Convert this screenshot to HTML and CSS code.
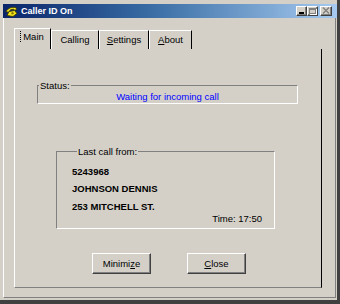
FILE: index.html
```html
<!DOCTYPE html>
<html>
<head>
<meta charset="utf-8">
<title>Caller ID On</title>
<link rel="stylesheet" href="styles.css">
</head>
<body>
<div class="window">
  <div class="titlebar">
    <svg class="appicon" width="13" height="11" viewBox="0 0 13 11">
      <path d="M2 9.5 L4 5.5 L9.5 4.5 L12 7.5 L8 10.5 Z" fill="#f4e41c" stroke="#3a3a00" stroke-width="0.9"/>
      <path d="M0.8 5.5 Q4.5 0.3 11 1.5 L11.5 3.8 L9.3 4.2 L8.5 3 Q5.5 3 3.2 6.2 Z" fill="#f8ec30" stroke="#3a3a00" stroke-width="0.9"/>
      <circle cx="7.5" cy="7.3" r="1.2" fill="#8a7a00"/>
    </svg>
    <span class="title">Caller ID On</span>
    <div class="tbtns">
      <span class="tbtn"><span class="glyph-min"></span></span>
      <span class="tbtn"><span class="glyph-max"></span></span>
      <span class="tbtn tclose">
        <svg width="8" height="7" viewBox="0 0 8 7"><path d="M1 0.5 L7 6.5 M7 0.5 L1 6.5" stroke="#808080" stroke-width="1.4"/></svg>
      </span>
    </div>
  </div>
  <div class="client">
    <div class="tabs">
      <div class="tab tab-main active"><span class="focus">Main</span></div>
      <div class="tab tab-calling">Calling</div>
      <div class="tab tab-settings"><u>S</u>ettings</div>
      <div class="tab tab-about"><u>A</u>bout</div>
    </div>
    <div class="panel">
      <fieldset class="group status">
        <legend>Status:</legend>
        <div class="status-text">Waiting for incoming call</div>
      </fieldset>
      <fieldset class="group last">
        <legend>Last call from:</legend>
        <div class="line l1">5243968</div>
        <div class="line l2">JOHNSON DENNIS</div>
        <div class="line l3">253 MITCHELL ST.</div>
        <div class="time">Time: 17:50</div>
      </fieldset>
      <div class="buttons">
        <button class="btn">Minimi<u>z</u>e</button>
        <button class="btn"><u>C</u>lose</button>
      </div>
    </div>
  </div>
</div>
</body>
</html>
```

FILE: styles.css
```css
html, body {
  margin: 0;
  padding: 0;
  background: #d4d0c8;
}
body {
  font-family: "Liberation Sans", Arial, sans-serif;
  font-size: 9.5px;
  color: #000;
}
.window {
  width: 340px;
  height: 304px;
  box-sizing: border-box;
  background: #d4d0c8;
  padding: 4px 0 0 3px;
  border-right: 3px solid #404040;
  border-bottom: 4px solid #404040;
}
.titlebar {
  width: 334px;
  height: 14px;
  box-sizing: border-box;
  background: linear-gradient(to right, #0a246a 0%, #3a6ea5 45%, #a6caf0 100%);
  display: flex;
  align-items: center;
  padding-left: 2px;
}
.appicon {
  display: block;
  flex: none;
}
.title {
  color: #fff;
  font-weight: bold;
  font-size: 9px;
  margin-left: 3px;
  line-height: 14px;
}
.tbtns {
  margin-left: auto;
  margin-right: 5px;
  display: flex;
  height: 11px;
}
.tbtn {
  width: 11px;
  height: 10px;
  box-sizing: border-box;
  background: #d4d0c8;
  border-top: 1px solid #fff;
  border-left: 1px solid #fff;
  border-right: 1px solid #404040;
  border-bottom: 1px solid #404040;
  box-shadow: inset -1px -1px 0 #808080;
  display: flex;
  align-items: center;
  justify-content: center;
}
.tclose {
  margin-left: 2px;
  width: 12px;
}
.glyph-min {
  width: 5px;
  height: 2px;
  background: #000;
  margin-top: 4px;
  margin-right: 1px;
}
.glyph-max {
  width: 7px;
  height: 6px;
  box-sizing: border-box;
  border: 1px solid #808080;
  border-top-width: 2px;
  box-shadow: 1px 1px 0 #fff;
}
.client {
  width: 333px;
  height: 280px;
  box-sizing: border-box;
  border-left: 1px solid #fff;
  border-right: 1px solid #808080;
  border-bottom: 1px solid #808080;
  padding: 10px 0 0 10px;
}
.tabs {
  display: flex;
  align-items: flex-end;
  height: 21px;
}
.tab {
  height: 19px;
  box-sizing: border-box;
  border-top: 1px solid #fff;
  border-left: 1px solid #fff;
  border-right: 1px solid #000;
  display: flex;
  align-items: center;
  justify-content: center;
  line-height: 11px;
  padding-bottom: 2px;
}
.tab.active {
  height: 21px;
  padding-bottom: 5px;
}
.tab-main { width: 37px; }
.tab-calling { width: 48px; }
.tab-settings { width: 50px; }
.tab-about { width: 43px; }
.focus {
  border-left: 1px dotted #000;
  padding: 0 1px 0 2px;
}
.panel {
  width: 308px;
  height: 239px;
  box-sizing: border-box;
  border-left: 1px solid #fff;
  border-right: 1px solid #000;
  border-bottom: 1px solid #808080;
  padding-top: 31px;
}
.group {
  margin: 0;
  padding: 0;
  box-sizing: border-box;
  border-top: 1px solid #808080;
  border-left: 1px solid #808080;
  border-right: 1px solid #fff;
  border-bottom: 1px solid #fff;
  min-width: 0;
}
.group legend {
  padding: 0 1px;
  line-height: 11px;
  font-size: 9.5px;
}
.status {
  margin-left: 22px;
  width: 261px;
}
.status legend {
  margin-left: 1px;
}
.status-text {
  color: #0000ff;
  text-align: center;
  line-height: 11px;
  padding: 0 0 1px 0;
}
.last {
  margin-top: 42px;
  margin-left: 41px;
  width: 219px;
  padding: 9px 12px 4px 15px;
}
.last legend {
  margin-left: 5px;
}
.line {
  font-weight: bold;
  line-height: 11px;
}
.l2 { margin-top: 6px; }
.l3 { margin-top: 7px; }
.time {
  margin-top: 1px;
  line-height: 11px;
  text-align: right;
}
.buttons {
  display: flex;
  gap: 36px;
  margin-top: 24px;
  margin-left: 77px;
}
.btn {
  width: 59px;
  height: 21px;
  box-sizing: border-box;
  margin: 0;
  padding: 0;
  background: #d4d0c8;
  font-family: "Liberation Sans", Arial, sans-serif;
  font-size: 9.5px;
  color: #000;
  border-top: 1px solid #fff;
  border-left: 1px solid #fff;
  border-right: 1px solid #404040;
  border-bottom: 1px solid #404040;
  box-shadow: inset -1px -1px 0 #808080;
  line-height: 11px;
}
```
